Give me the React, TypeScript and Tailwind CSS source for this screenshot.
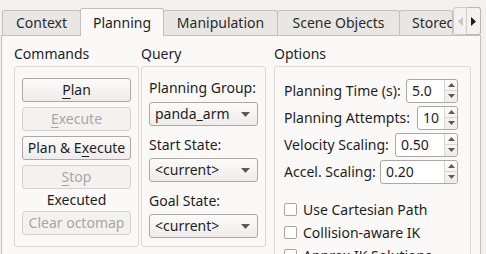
import React from 'react';

const font = { fontFamily: '"Noto Sans", "DejaVu Sans", sans-serif' };

function Tab({ label, active, className = '' }: { label: string; active?: boolean; className?: string }) {
  if (active) {
    return (
      <div className={`h-[28px] -mb-px relative z-10 flex items-center justify-center border border-b-0 border-[#c4c0bb] rounded-t-[3px] bg-[#faf9f7] text-[#1e1e1e] ${className}`}>
        {label}
      </div>
    );
  }
  return (
    <div className={`h-[25px] flex items-center justify-center border border-b-0 border-[#c4c0bb] rounded-t-[3px] bg-[#e9e7e4] text-[#2b2b2b] -ml-px ${className}`}>
      {label}
    </div>
  );
}

function PushButton({ children, disabled }: { children: React.ReactNode; disabled?: boolean }) {
  return (
    <div
      className={`h-[24px] shrink-0 flex items-center justify-center rounded-[3px] border ${
        disabled
          ? 'border-[#d6d3cf] bg-[#f4f2f0] text-[#a9a6a2]'
          : 'border-[#aca8a3] bg-gradient-to-b from-[#fbfbfa] to-[#efedeb] text-[#1e1e1e]'
      }`}
    >
      {children}
    </div>
  );
}

function U({ children }: { children: React.ReactNode }) {
  return <span className="underline underline-offset-[3px] decoration-1">{children}</span>;
}

function Combo({ value }: { value: string }) {
  return (
    <div className="h-[24px] w-[109px] shrink-0 flex items-center justify-between pl-[5px] pr-[7px] rounded-[3px] border border-[#aca8a3] bg-gradient-to-b from-[#fbfbfa] to-[#efedeb] text-[#1e1e1e]">
      <span>{value}</span>
      <svg width="9" height="5" viewBox="0 0 9 5">
        <path d="M0 0 H9 L4.5 5 Z" fill="#5d5b58" />
      </svg>
    </div>
  );
}

function Spin({ value, width }: { value: string; width: string }) {
  return (
    <div className={`h-[24px] flex rounded-[3px] border border-[#aca8a3] bg-white ${width}`}>
      <div className="flex-1 flex items-center pl-[5px] text-[#1e1e1e]">{value}</div>
      <div className="w-[13px] flex flex-col border-l border-[#d9d6d2] bg-gradient-to-b from-[#fbfbfa] to-[#efedeb] rounded-r-[3px]">
        <div className="flex-1 flex items-center justify-center border-b border-[#d9d6d2]">
          <svg width="7" height="4" viewBox="0 0 7 4">
            <path d="M0 4 H7 L3.5 0 Z" fill="#5d5b58" />
          </svg>
        </div>
        <div className="flex-1 flex items-center justify-center">
          <svg width="7" height="4" viewBox="0 0 7 4">
            <path d="M0 0 H7 L3.5 4 Z" fill="#5d5b58" />
          </svg>
        </div>
      </div>
    </div>
  );
}

function Check({ label }: { label: string }) {
  return (
    <div className="flex items-center gap-[6px] h-[23px] shrink-0">
      <div className="w-[13px] h-[13px] rounded-[2px] border border-[#a9a5a0] bg-white" />
      <span>{label}</span>
    </div>
  );
}

function SpinRow({ label, value, width }: { label: string; value: string; width: string }) {
  return (
    <div className="flex items-center justify-end gap-[3px] h-[27px] shrink-0">
      <span className="mr-auto whitespace-nowrap">{label}</span>
      <Spin value={value} width={width} />
    </div>
  );
}

export default function App() {
  return (
    <div className="w-[486px] h-[254px] overflow-hidden bg-[#f2f1f0] text-[14px] leading-none relative" style={font}>
      {/* Tab bar */}
      <div className="flex items-end h-[35px] pl-[2px] pr-[5px]">
        <Tab label="Context" className="w-[79px] ml-0" />
        <Tab label="Planning" active className="w-[84px] -ml-px" />
        <Tab label="Manipulation" className="w-[115px]" />
        <Tab label="Scene Objects" className="w-[123px]" />
        <div className="flex-1 h-[25px] overflow-hidden border border-b-0 border-[#c4c0bb] rounded-t-[3px] bg-[#e9e7e4] text-[#2b2b2b] -ml-px flex items-center pl-[12px] whitespace-nowrap">
          Stored Plans
        </div>
        <div className="h-[28px] flex self-end">
          <div className="w-[14px] flex items-center justify-center border border-[#cfccc8] rounded-l-[3px] bg-[#f3f2f0]">
            <svg width="5" height="9" viewBox="0 0 5 9">
              <path d="M5 0 V9 L0 4.5 Z" fill="#c9c6c2" />
            </svg>
          </div>
          <div className="w-[14px] flex items-center justify-center border border-l-0 border-[#b9b5b0] rounded-r-[3px] bg-[#f3f2f0]">
            <svg width="5" height="9" viewBox="0 0 5 9">
              <path d="M0 0 V9 L5 4.5 Z" fill="#1e1e1e" />
            </svg>
          </div>
        </div>
      </div>

      {/* Tab page */}
      <div className="ml-[1px] mr-[5px] h-[240px] border border-[#c4c0bb] bg-[#faf9f7] flex gap-[2px] pl-[12px] pt-[11px] text-[#1e1e1e]">
        {/* Commands */}
        <div className="w-[125px] flex flex-col">
          <div className="h-[19px] shrink-0">Commands</div>
          <div className="h-[181px] shrink-0 border border-[#dcd9d5] rounded-[3px] px-[7px] pt-[11px] flex flex-col gap-[5px]">
            <PushButton><U>P</U>lan</PushButton>
            <PushButton disabled><U>E</U>xecute</PushButton>
            <PushButton>Plan &amp; E<U>x</U>ecute</PushButton>
            <PushButton disabled><U>S</U>top</PushButton>
            <div className="h-[12px] flex items-center justify-center">Executed</div>
            <PushButton disabled>Clear octomap</PushButton>
          </div>
        </div>

        {/* Query */}
        <div className="w-[125px] flex flex-col">
          <div className="h-[19px] shrink-0">Query</div>
          <div className="h-[181px] shrink-0 border border-[#dcd9d5] rounded-[3px] px-[7px] pt-[14px] flex flex-col">
            <div className="h-[21px] shrink-0">Planning Group:</div>
            <Combo value="panda_arm" />
            <div className="h-[32px] shrink-0 pt-[12px]">Start State:</div>
            <Combo value="<current>" />
            <div className="h-[32px] shrink-0 pt-[12px]">Goal State:</div>
            <Combo value="<current>" />
          </div>
        </div>

        {/* Options */}
        <div className="w-[197px] ml-[6px] flex flex-col">
          <div className="h-[19px] shrink-0">Options</div>
          <div className="h-[240px] shrink-0 border border-[#dcd9d5] rounded-[3px] pl-[9px] pr-[12px] pt-[10px] flex flex-col">
            <SpinRow label="Planning Time (s):" value="5.0" width="w-[52px]" />
            <SpinRow label="Planning Attempts:" value="10" width="w-[41px]" />
            <SpinRow label="Velocity Scaling:" value="0.50" width="w-[63px]" />
            <SpinRow label="Accel. Scaling:" value="0.20" width="w-[78px]" />
            <div className="mt-[13px] flex flex-col shrink-0">
              <Check label="Use Cartesian Path" />
              <Check label="Collision-aware IK" />
              <Check label="Approx IK Solutions" />
            </div>
          </div>
        </div>
      </div>
    </div>
  );
}
